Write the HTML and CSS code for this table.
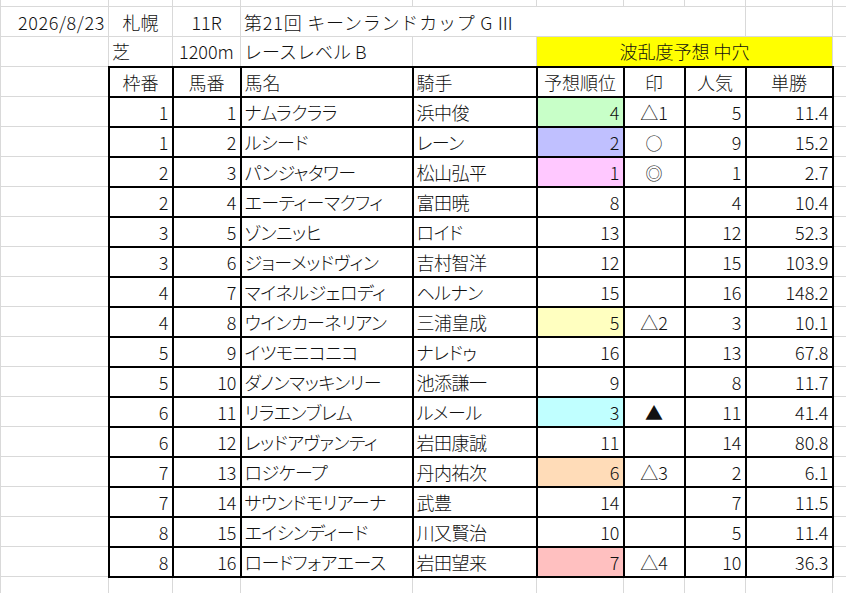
FILE: index.html
```html
<!DOCTYPE html>
<html lang="ja">
<head>
<meta charset="utf-8">
<title>キーンランドカップ 予想</title>
<link rel="stylesheet" href="styles.css">
</head>
<body>
<table class="sheet">
<colgroup>
<col class="c-a"><col class="c-b"><col class="c-c"><col class="c-d"><col class="c-e"><col class="c-f"><col class="c-g"><col class="c-h"><col class="c-i"><col class="c-j">
</colgroup>
<tr class="r0"><td></td><td></td><td></td><td></td><td></td><td></td><td></td><td></td><td></td><td></td></tr>
<tr>
<td class="r date">2026/8/23</td><td class="c">札幌</td><td class="c">11R</td><td class="l title" colspan="5">第21回 キーンランドカップ G<span class="roman">Ⅲ</span></td><td></td><td></td>
</tr>
<tr>
<td></td><td class="l">芝</td><td class="c">1200m</td><td class="l">レースレベル B</td><td></td><td class="c yellow" colspan="4">波乱度予想 中穴</td><td></td>
</tr>
<tr class="head">
<td></td><td class="b c">枠番</td><td class="b c">馬番</td><td class="b l">馬名</td><td class="b l">騎手</td><td class="b c">予想順位</td><td class="b c">印</td><td class="b c">人気</td><td class="b c">単勝</td><td></td>
</tr>
<tr><td></td><td class="b r">1</td><td class="b r">1</td><td class="b l name">ナムラクララ</td><td class="b l name">浜中俊</td><td class="b r green">4</td><td class="b c">△1</td><td class="b r">5</td><td class="b r">11.4</td><td></td></tr>
<tr><td></td><td class="b r">1</td><td class="b r">2</td><td class="b l name">ルシード</td><td class="b l name">レーン</td><td class="b r blue">2</td><td class="b c"><span class="mark">○</span></td><td class="b r">9</td><td class="b r">15.2</td><td></td></tr>
<tr><td></td><td class="b r">2</td><td class="b r">3</td><td class="b l name">パンジャタワー</td><td class="b l name">松山弘平</td><td class="b r pink">1</td><td class="b c"><span class="mark">◎</span></td><td class="b r">1</td><td class="b r">2.7</td><td></td></tr>
<tr><td></td><td class="b r">2</td><td class="b r">4</td><td class="b l name">エーティーマクフィ</td><td class="b l name">富田暁</td><td class="b r">8</td><td class="b c"></td><td class="b r">4</td><td class="b r">10.4</td><td></td></tr>
<tr><td></td><td class="b r">3</td><td class="b r">5</td><td class="b l name">ゾンニッヒ</td><td class="b l name">ロイド</td><td class="b r">13</td><td class="b c"></td><td class="b r">12</td><td class="b r">52.3</td><td></td></tr>
<tr><td></td><td class="b r">3</td><td class="b r">6</td><td class="b l name">ジョーメッドヴィン</td><td class="b l name">吉村智洋</td><td class="b r">12</td><td class="b c"></td><td class="b r">15</td><td class="b r">103.9</td><td></td></tr>
<tr><td></td><td class="b r">4</td><td class="b r">7</td><td class="b l name">マイネルジェロディ</td><td class="b l name">ヘルナン</td><td class="b r">15</td><td class="b c"></td><td class="b r">16</td><td class="b r">148.2</td><td></td></tr>
<tr><td></td><td class="b r">4</td><td class="b r">8</td><td class="b l name">ウインカーネリアン</td><td class="b l name">三浦皇成</td><td class="b r lyellow">5</td><td class="b c">△2</td><td class="b r">3</td><td class="b r">10.1</td><td></td></tr>
<tr><td></td><td class="b r">5</td><td class="b r">9</td><td class="b l name">イツモニコニコ</td><td class="b l name">ナレドゥ</td><td class="b r">16</td><td class="b c"></td><td class="b r">13</td><td class="b r">67.8</td><td></td></tr>
<tr><td></td><td class="b r">5</td><td class="b r">10</td><td class="b l name">ダノンマッキンリー</td><td class="b l name">池添謙一</td><td class="b r">9</td><td class="b c"></td><td class="b r">8</td><td class="b r">11.7</td><td></td></tr>
<tr><td></td><td class="b r">6</td><td class="b r">11</td><td class="b l name">リラエンブレム</td><td class="b l name">ルメール</td><td class="b r cyan">3</td><td class="b c">▲</td><td class="b r">11</td><td class="b r">41.4</td><td></td></tr>
<tr><td></td><td class="b r">6</td><td class="b r">12</td><td class="b l name">レッドアヴァンティ</td><td class="b l name">岩田康誠</td><td class="b r">11</td><td class="b c"></td><td class="b r">14</td><td class="b r">80.8</td><td></td></tr>
<tr><td></td><td class="b r">7</td><td class="b r">13</td><td class="b l name">ロジケープ</td><td class="b l name">丹内祐次</td><td class="b r peach">6</td><td class="b c">△3</td><td class="b r">2</td><td class="b r">6.1</td><td></td></tr>
<tr><td></td><td class="b r">7</td><td class="b r">14</td><td class="b l name">サウンドモリアーナ</td><td class="b l name">武豊</td><td class="b r">14</td><td class="b c"></td><td class="b r">7</td><td class="b r">11.5</td><td></td></tr>
<tr><td></td><td class="b r">8</td><td class="b r">15</td><td class="b l name">エイシンディード</td><td class="b l name">川又賢治</td><td class="b r">10</td><td class="b c"></td><td class="b r">5</td><td class="b r">11.4</td><td></td></tr>
<tr><td></td><td class="b r">8</td><td class="b r">16</td><td class="b l name">ロードフォアエース</td><td class="b l name">岩田望来</td><td class="b r red">7</td><td class="b c">△4</td><td class="b r">10</td><td class="b r">36.3</td><td></td></tr>
<tr><td></td><td></td><td></td><td></td><td></td><td></td><td></td><td></td><td></td><td></td></tr>
</table>
</body>
</html>
```

FILE: styles.css
```css
html, body {
  margin: 0;
  padding: 0;
  background: #fff;
  overflow: hidden;
}

body {
  width: 846px;
  height: 593px;
}

.sheet {
  border-collapse: collapse;
  table-layout: fixed;
  width: 860px;
  font-family: "Noto Sans CJK JP", "Noto Sans", sans-serif;
  font-size: 18px;
  font-weight: 300;
  color: #111;
  margin-top: -24px;
}

.c-a { width: 108px; }
.c-b { width: 64px; }
.c-c { width: 68px; }
.c-d { width: 172px; }
.c-e { width: 124px; }
.c-f { width: 87px; }
.c-g { width: 61px; }
.c-h { width: 61px; }
.c-i { width: 87px; }
.c-j { width: 28px; }

.sheet tr {
  height: 30px;
}

.sheet td {
  border: 1px solid #d9d9d9;
  padding: 0 3px;
  line-height: 1;
  white-space: nowrap;
  overflow: visible;
  vertical-align: middle;
}

.sheet td.b {
  border: 2px solid #000;
}

.name {
  font-feature-settings: "palt";
  letter-spacing: -0.5px;
}

.date {
  letter-spacing: 0.6px;
  padding-right: 4px;
}

.title {
  padding-left: 3px;
  letter-spacing: 0.8px;
}

.roman {
  margin-left: 3px;
}

.mark {
  font-size: 17px;
}

.r { text-align: right; }
.c { text-align: center; }
.l { text-align: left; }

.yellow { background: #ffff00; }
.green { background: #c8ffc8; }
.blue { background: #c0c0ff; }
.pink { background: #ffc8ff; }
.lyellow { background: #ffffc0; }
.cyan { background: #c0ffff; }
.peach { background: #ffdcb8; }
.red { background: #ffc0c0; }
```
